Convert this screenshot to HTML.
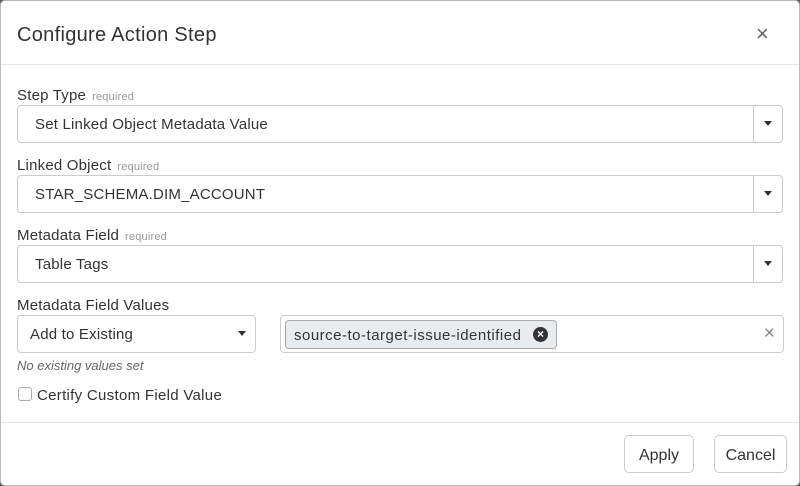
<!DOCTYPE html>
<html><head><style>
*{box-sizing:border-box;margin:0;padding:0}
body{width:800px;height:486px;background:#5a5a5a;font-family:"Liberation Sans",sans-serif;color:#333;position:relative;overflow:hidden}
.modal{position:absolute;left:0;top:0;width:800px;height:486px;background:#fff;border:1px solid #bbb;border-radius:5px}
.a{position:absolute}
.title{left:16px;top:23px;font-size:20px;color:#333;letter-spacing:0.3px}
.close{left:755px;top:20px;font-size:22px;color:#666}
.hr{left:0;width:798px;height:1px;background:#e5e5e5}
.lbl{left:16px;font-size:15px;color:#333;letter-spacing:0.2px}
.lbl small{font-size:11px;color:#999;margin-left:6px}
.sel{left:16px;width:766px;height:38px;border:1px solid #ccc;border-radius:4px;font-size:15px;padding:10px 0 0 17px;color:#333;letter-spacing:0.2px}
.sel .dv{position:absolute;right:28px;top:0;width:1px;height:36px;background:#ccc}
.sel .ar{position:absolute;right:10px;top:15px;width:0;height:0;border-left:4px solid transparent;border-right:4px solid transparent;border-top:5px solid #333}
.btn{height:38px;border:1px solid #ccc;border-radius:5px;font-size:16px;padding:11px 0 0;text-align:center;color:#333}
</style></head><body>
<div class="modal">
<div class="a title">Configure Action Step</div>
<div class="a close">×</div>
<div class="a hr" style="top:63px"></div>
<div class="a lbl" style="top:86px">Step Type<small>required</small></div>
<div class="a sel" style="top:104px">Set Linked Object Metadata Value<div class="dv"></div><div class="ar"></div></div>
<div class="a lbl" style="top:156px">Linked Object<small>required</small></div>
<div class="a sel" style="top:174px">STAR_SCHEMA.DIM_ACCOUNT<div class="dv"></div><div class="ar"></div></div>
<div class="a lbl" style="top:226px">Metadata Field<small>required</small></div>
<div class="a sel" style="top:244px">Table Tags<div class="dv"></div><div class="ar"></div></div>
<div class="a lbl" style="top:296px">Metadata Field Values</div>
<div class="a sel" style="top:314px;width:239px;padding-left:12px">Add to Existing<div class="ar" style="right:9px;top:15px"></div></div>
<div class="a sel" style="top:314px;left:279px;width:504px;padding:0"><div class="a" style="left:4px;top:4px;width:272px;height:29px;background:#e8ecef;border:1px solid #aaa;border-radius:4px;font-size:15px;padding:6px 0 0 8px;letter-spacing:0.5px">source-to-target-issue-identified<span style="position:absolute;left:247px;top:6px;width:15px;height:15px;border-radius:50%;background:#333;color:#fff;font-size:12px;line-height:15px;text-align:center;font-weight:bold;letter-spacing:0">×</span></div><div class="a" style="right:8px;top:7px;font-size:19px;color:#888">×</div></div>
<div class="a" style="left:16px;top:357px;font-size:13px;font-style:italic;color:#666">No existing values set</div>
<div class="a" style="left:17px;top:386px;width:14px;height:14px;border:1px solid #aaa;border-radius:3px"></div>
<div class="a" style="left:36px;top:386px;font-size:15px;letter-spacing:0.3px">Certify Custom Field Value</div>
<div class="a hr" style="top:421px"></div>
<div class="a btn" style="left:623px;top:434px;width:70px">Apply</div>
<div class="a btn" style="left:713px;top:434px;width:73px">Cancel</div>
</div>
</body></html>
